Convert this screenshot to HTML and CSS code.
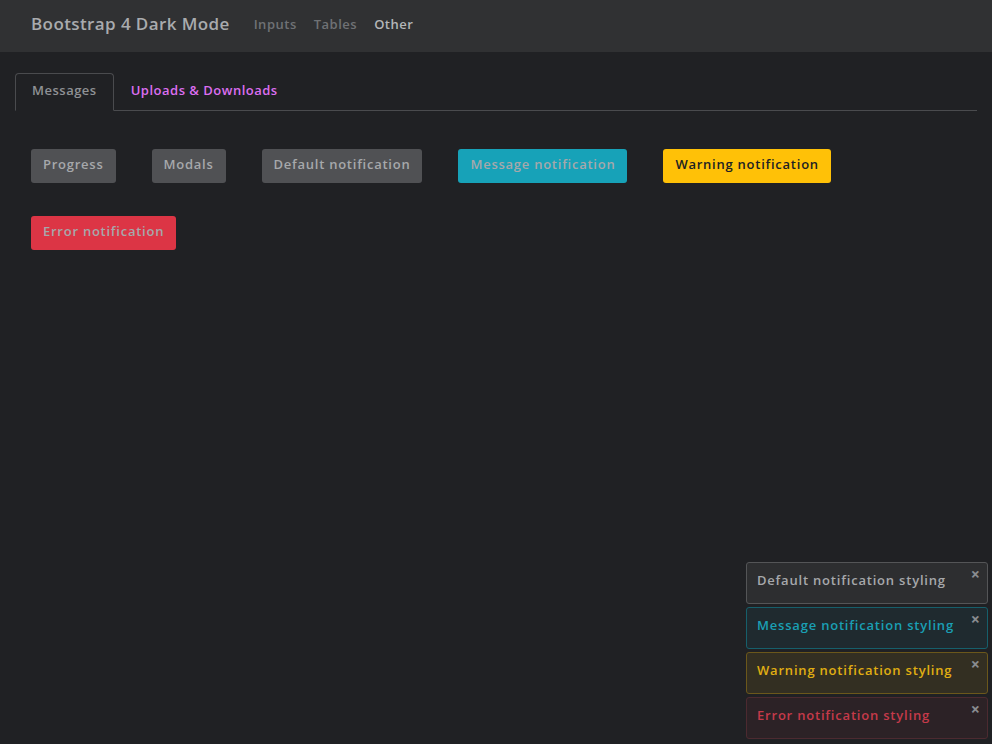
FILE: index.html
```html
<!DOCTYPE html>
<html>
<head>
<meta charset="utf-8">
<link rel="stylesheet" href="styles.css">
</head>
<body>
<nav class="navbar">
  <a class="brand">Bootstrap 4 Dark Mode</a>
  <ul class="nav-links">
    <li><a>Inputs</a></li>
    <li><a>Tables</a></li>
    <li><a class="active">Other</a></li>
  </ul>
</nav>
<main class="container">
  <ul class="tabs">
    <li><a class="tab active">Messages</a></li>
    <li><a class="tab link">Uploads &amp; Downloads</a></li>
  </ul>
  <div class="buttons">
    <button class="btn btn-secondary">Progress</button>
    <button class="btn btn-secondary">Modals</button>
    <button class="btn btn-secondary">Default notification</button>
    <button class="btn btn-info">Message notification</button>
    <button class="btn btn-warning">Warning notification</button>
    <button class="btn btn-danger">Error notification</button>
  </div>
</main>
<div class="toasts">
  <div class="toast toast-default"><span>Default notification styling</span><span class="close">&times;</span></div>
  <div class="toast toast-info"><span>Message notification styling</span><span class="close">&times;</span></div>
  <div class="toast toast-warning"><span>Warning notification styling</span><span class="close">&times;</span></div>
  <div class="toast toast-error"><span>Error notification styling</span><span class="close">&times;</span></div>
</div>
</body>
</html>
```
FILE: styles.css
```css
* { box-sizing: border-box; }
html, body { margin: 0; height: 100%; }
body {
  background: #202124;
  font-family: "Open Sans", "Noto Sans", sans-serif;
  color: #a9abae;
  overflow: hidden;
}
.navbar {
  height: 52px;
  background: #303133;
  display: flex;
  align-items: center;
  padding: 0 31px 6px;
}
.brand {
  font-size: 17px;
  font-weight: 600;
  letter-spacing: 0.4px;
  color: #a9abae;
  margin-right: 24px;
}
.nav-links {
  display: flex;
  list-style: none;
  margin: 0;
  padding: 0;
  gap: 17px;
  font-size: 13px;
  letter-spacing: 0.5px;
  padding-top: 2px;
}
.nav-links a { color: #6f7175; font-weight: 600; }
.nav-links a.active { color: #b4b6b9; }
.container { padding: 21px 15px; }
.tabs {
  display: flex;
  list-style: none;
  margin: 0;
  padding: 0;
  border-bottom: 1px solid #4a4b4e;
}
.tab {
  display: block;
  height: 38px;
  line-height: 32px;
  padding: 0 16px;
  font-size: 13px;
  font-weight: 600;
  letter-spacing: 0.5px;
  border: 1px solid transparent;
  border-radius: 4px 4px 0 0;
  margin-bottom: -1px;
}
.tab.active {
  color: #8f9195;
  border-color: #4a4b4e #4a4b4e #202124;
  background: #202124;
}
.tab.link { color: #dc6ef0; }
.buttons {
  display: flex;
  flex-wrap: wrap;
  gap: 33px 36px;
  padding: 38px 16px 0;
}
.btn {
  font-family: inherit;
  font-size: 13px;
  font-weight: 600;
  letter-spacing: 0.75px;
  height: 34px;
  padding: 0 12px 5px;
  border: none;
  border-radius: 3px;
  color: #a6a8ab;
  cursor: pointer;
}
.btn-secondary { background: #505154; }
.btn-info { background: #17a2b8; }
.btn-warning { background: #ffc107; color: #202124; }
.btn-danger { background: #dc3545; }
.toasts {
  position: absolute;
  right: 4px;
  bottom: 5px;
  width: 242px;
  display: flex;
  flex-direction: column;
  gap: 3px;
}
.toast {
  height: 42px;
  border: 1px solid;
  border-radius: 3px;
  padding: 0 10px;
  display: flex;
  justify-content: space-between;
  font-size: 13px;
  font-weight: 600;
  letter-spacing: 0.8px;
}
.toast span:first-child { line-height: 35px; }
.close {
  color: #8a8c90;
  font-size: 16px;
  line-height: 20px;
  margin-top: 1px;
  margin-right: -3px;
  font-weight: 700;
  letter-spacing: 0;
}
.toast-default { background: #2d2e30; border-color: #545557; color: #a6a8ab; }
.toast-info { background: #1f2a2f; border-color: #165f6b; color: #1a9fb4; }
.toast-warning { background: #332f22; border-color: #6b571b; color: #e0ae12; }
.toast-error { background: #2c2226; border-color: #4c2a30; color: #c53a4a; }
```
